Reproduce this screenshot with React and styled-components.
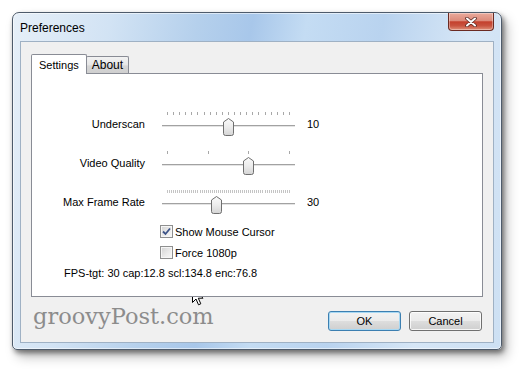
import React from 'react'
import styled, { createGlobalStyle } from 'styled-components'

const GlobalStyle = createGlobalStyle`
  html, body {
    margin: 0;
    padding: 0;
    background: #fff;
  }
  body {
    font-family: "Liberation Sans", Arial, sans-serif;
    font-size: 11px;
    color: #000;
  }
`

const Stage = styled.div`
  position: relative;
  width: 522px;
  height: 371px;
  padding: 12px;
  box-sizing: border-box;
  overflow: hidden;
`

const Window = styled.div`
  width: 490px;
  height: 338px;
  box-sizing: border-box;
  border: 1px solid #4e5b6b;
  border-radius: 7px 7px 5px 5px;
  padding: 0 7px 6px 7px;
  display: flex;
  flex-direction: column;
  background: linear-gradient(100deg, #e6eff8 0%, #d2e3f4 18%, #b5d0ec 34%, #a8c7ea 44%, #c4dcf3 54%, #b9d3ef 68%, #d6e6f6 84%, #cde0f3 100%);
  box-shadow: inset 0 0 0 1px rgba(255, 255, 255, 0.55), 2px 3px 5px rgba(0, 0, 0, 0.45), 5px 7px 12px rgba(0, 0, 0, 0.25);
`

const TitleBar = styled.div`
  height: 28px;
  display: flex;
  align-items: flex-start;
`

const Title = styled.div`
  font-family: "Liberation Sans", Arial, sans-serif;
  font-size: 12px;
  line-height: 15px;
  margin-top: 8px;
  color: #000;
`

const CloseButton = styled.div`
  margin-left: auto;
  width: 46px;
  height: 18px;
  box-sizing: border-box;
  border: 1px solid #6a2a22;
  border-top: none;
  border-radius: 0 0 4px 4px;
  background: linear-gradient(#eaaa9c 0%, #dc8b7b 45%, #c4402d 52%, #c8533f 75%, #e0917a 100%);
  box-shadow: inset 0 0 0 1px rgba(255, 255, 255, 0.35);
  display: flex;
  align-items: center;
  justify-content: center;
`

const Client = styled.div`
  flex: 1;
  background: #f0f0f0;
  border: 1px solid #9fb1c4;
  padding: 12px 10px 0 10px;
  display: flex;
  flex-direction: column;
`

const TabStrip = styled.div`
  display: flex;
  align-items: flex-end;
  height: 19px;
  position: relative;
  z-index: 2;
`

const Tab = styled.div`
  position: relative;
  box-sizing: border-box;
  border: 1px solid #898c95;
  border-bottom: none;
  border-radius: 2px 2px 0 0;
  display: flex;
  align-items: center;
  justify-content: center;
  height: ${p => (p.$active ? '20px' : '17px')};
  margin-bottom: ${p => (p.$active ? '-1px' : '0')};
  padding: 0 ${p => (p.$active ? '7px' : '5px')};
  margin-left: ${p => (p.$active ? '0' : '-1px')};
  z-index: ${p => (p.$active ? 2 : 1)};
  background: ${p => (p.$active ? '#fff' : 'linear-gradient(#f2f2f2 0%, #e6e6e6 50%, #d6d6d6 55%, #cfcfcf 100%)')};
  font-size: ${p => (p.$active ? '11px' : '12px')};
`

const Panel = styled.div`
  position: relative;
  z-index: 1;
  height: 224px;
  box-sizing: border-box;
  background: #fff;
  border: 1px solid #898c95;
  padding-top: 36px;
  display: flex;
  flex-direction: column;
`

const SettingRow = styled.div`
  display: grid;
  grid-template-columns: 130px 145px auto;
  margin-bottom: 13px;
`

const Label = styled.div`
  text-align: right;
  padding-right: 17px;
  line-height: 13px;
  margin-top: 8px;
`

const Value = styled.div`
  line-height: 13px;
  margin-top: 8px;
`

const SliderBox = styled.div`
  position: relative;
  width: 133px;
  height: 26px;
`

const Ticks = styled.div`
  display: flex;
  justify-content: space-between;
  margin: 2px 5px 0 5px;
  height: 3px;
`

const Tick = styled.div`
  width: 1px;
  height: 3px;
  background: ${p => (p.$dense ? '#c4c4c4' : '#a8a8a8')};
`

const Track = styled.div`
  margin-top: 10px;
  height: 1px;
  background: #a2a2a2;
  border-bottom: 1px solid #e4e4e4;
`

const ThumbWrap = styled.div`
  position: absolute;
  top: 8px;
  width: 11px;
  height: 18px;
`

const CheckRow = styled.div`
  display: flex;
  align-items: center;
  gap: 2px;
  margin-left: 128px;
  height: 13px;
  margin-top: ${p => p.$gap}px;
`

const Box = styled.div`
  width: 13px;
  height: 13px;
  box-sizing: border-box;
  border: 1px solid #8e8f8f;
  background: linear-gradient(135deg, #d2d2d2 0%, #ececec 60%, #f8f8f8 100%);
  box-shadow: inset 0 0 0 1px #f6f6f6;
  display: flex;
  align-items: center;
  justify-content: center;
`

const Stats = styled.div`
  margin-left: 32px;
  margin-top: 8px;
  line-height: 13px;
`

const BottomRow = styled.div`
  display: flex;
  align-items: flex-start;
  padding-top: 14px;
`

const Watermark = styled.div`
  font-family: "DejaVu Serif", "Liberation Serif", serif;
  font-size: 22.5px;
  line-height: 24px;
  margin-left: 2px;
  margin-top: -7px;
  color: #8c8c8c;
`

const Buttons = styled.div`
  margin-left: auto;
  display: flex;
  gap: 8px;
  margin-right: 1px;
`

const Button = styled.div`
  width: 73px;
  height: 20px;
  box-sizing: border-box;
  border: 1px solid ${p => (p.$default ? '#3c7fb1' : '#707070')};
  border-radius: 3px;
  background: linear-gradient(#f2f2f2 0%, #ebebeb 50%, #dddddd 52%, #cfcfcf 100%);
  box-shadow: inset 0 0 0 1px ${p => (p.$default ? '#a7d8f3' : 'rgba(255, 255, 255, 0.8)')};
  display: flex;
  align-items: center;
  justify-content: center;
`

const Cursor = styled.svg`
  position: absolute;
  left: 192px;
  top: 287px;
`

const sliders = [
  { label: 'Underscan', ticks: 21, pos: 0.5, value: '10' },
  { label: 'Video Quality', ticks: 4, pos: 2 / 3, value: '' },
  { label: 'Max Frame Rate', ticks: 61, pos: 0.4, value: '30' },
]

const Thumb = ({ pos }) => (
  <ThumbWrap style={{ left: `${pos * 122}px` }}>
    <svg width="11" height="18" viewBox="0 0 11 18">
      <defs>
        <linearGradient id="thumbFill" x1="0" y1="0" x2="0" y2="1">
          <stop offset="0" stopColor="#fafafa" />
          <stop offset="0.5" stopColor="#ececec" />
          <stop offset="1" stopColor="#d4d4d4" />
        </linearGradient>
      </defs>
      <path
        d="M0.5 4 L5.5 0.5 L10.5 4 V15.5 Q10.5 17.5 8.5 17.5 H2.5 Q0.5 17.5 0.5 15.5 Z"
        fill="url(#thumbFill)"
        stroke="#6f6f6f"
      />
    </svg>
  </ThumbWrap>
)

const Slider = ({ ticks, pos }) => (
  <SliderBox>
    <Ticks>
      {Array.from({ length: ticks }, (_, i) => (
        <Tick key={i} $dense={ticks > 30} />
      ))}
    </Ticks>
    <Track />
    <Thumb pos={pos} />
  </SliderBox>
)

const Check = ({ checked }) => (
  <Box>
    {checked && (
      <svg width="9" height="9" viewBox="0 0 9 9">
        <path d="M1 4.5 L3.5 7 L8 1.5" fill="none" stroke="#3d5488" strokeWidth="1.8" />
      </svg>
    )}
  </Box>
)

const App = () => {
  return (
    <Stage>
      <GlobalStyle />
      <Window>
        <TitleBar>
          <Title>Preferences</Title>
          <CloseButton>
            <svg width="12" height="10" viewBox="0 0 12 10">
              <path d="M2 1.5 L10 8.5 M10 1.5 L2 8.5" stroke="#5a2a24" strokeWidth="3.6" strokeLinecap="round" />
              <path d="M2 1.5 L10 8.5 M10 1.5 L2 8.5" stroke="#fff" strokeWidth="2" strokeLinecap="round" />
            </svg>
          </CloseButton>
        </TitleBar>
        <Client>
          <TabStrip>
            <Tab $active>Settings</Tab>
            <Tab>About</Tab>
          </TabStrip>
          <Panel>
            {sliders.map(s => (
              <SettingRow key={s.label}>
                <Label>{s.label}</Label>
                <Slider ticks={s.ticks} pos={s.pos} />
                <Value>{s.value}</Value>
              </SettingRow>
            ))}
            <CheckRow $gap={-2}>
              <Check checked />
              Show Mouse Cursor
            </CheckRow>
            <CheckRow $gap={8}>
              <Check />
              Force 1080p
            </CheckRow>
            <Stats>FPS-tgt: 30 cap:12.8 scl:134.8 enc:76.8</Stats>
          </Panel>
          <BottomRow>
            <Watermark>groovyPost.com</Watermark>
            <Buttons>
              <Button $default>OK</Button>
              <Button>Cancel</Button>
            </Buttons>
          </BottomRow>
        </Client>
      </Window>
      <Cursor width="13" height="20" viewBox="0 0 13 20">
        <path d="M0.5 0.5 V15.5 L4 12 L6.5 17.8 L8.8 16.8 L6.3 11.2 H11 Z" fill="#fff" stroke="#000" strokeLinejoin="round" />
      </Cursor>
    </Stage>
  )
}

export default App
